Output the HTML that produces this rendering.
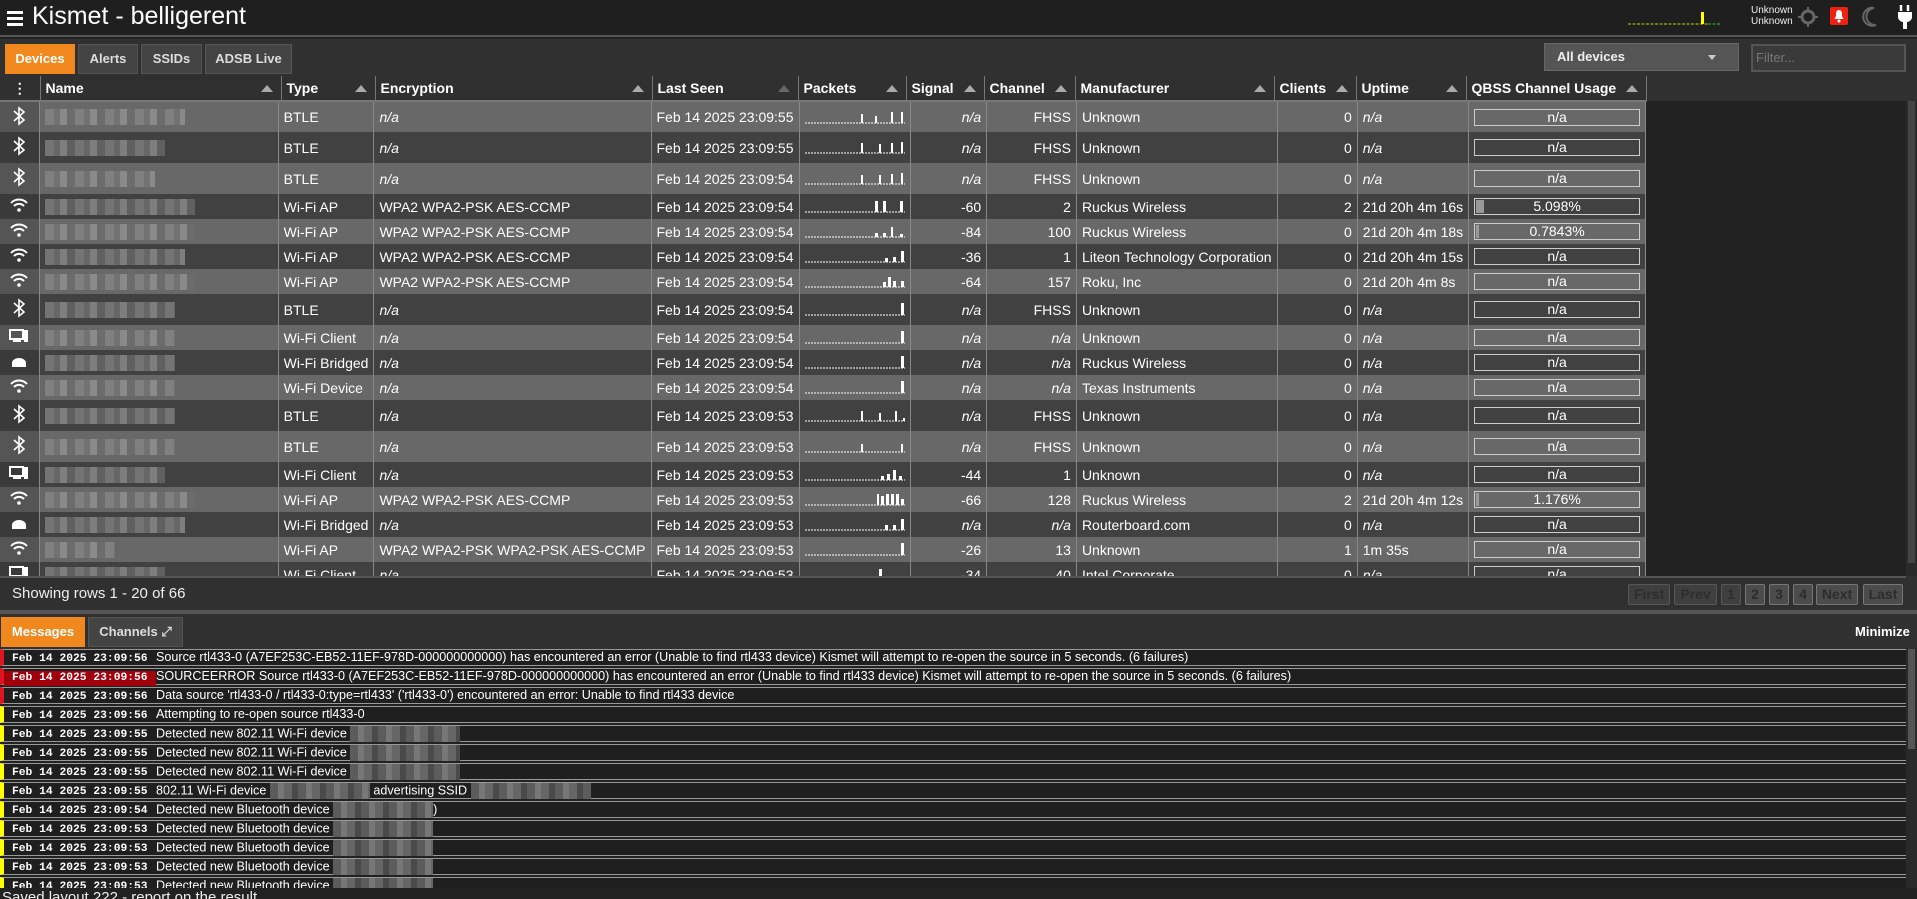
<!DOCTYPE html>
<html><head><meta charset="utf-8"><style>
*{box-sizing:border-box;margin:0;padding:0}
body{width:1917px;height:899px;overflow:hidden;background:#222;font-family:"Liberation Sans",sans-serif;color:#fff;position:relative}
.abs{position:absolute}
#hdr{left:0;top:0;width:1917px;height:37px;background:#1f1f1f;border-bottom:2px solid #555}
#title{left:32px;top:2px;font-size:25px;color:#fff}
#panel{left:0;top:39px;width:1917px;height:572px;background:#303030}
.tab{position:absolute;top:44px;height:30px;background:#444;border:1px solid #555;font-weight:bold;font-size:13px;color:#ddd;text-align:center;line-height:28px}
.tab.on{background:#f0881e;color:#fff;border-color:#f0881e}
table{border-collapse:collapse;table-layout:fixed;position:absolute;left:0;top:76px;font-size:14px}
th{height:25px;background:#303030;text-align:left;font-weight:bold;padding-left:5px;border-right:1px solid #777;border-bottom:2px solid #777;position:relative;white-space:nowrap}
th .ar{position:absolute;right:8px;top:9px;width:0;height:0;border-left:6px solid transparent;border-right:6px solid transparent;border-bottom:7px solid #aaa}
td{padding:0 5px;border-right:1px solid #888;white-space:nowrap;overflow:hidden;color:#fff}
tr.l td{background:#686868}
tr.d td{background:#414141}
tr.t td{height:31px}
tr.s td{height:25px}
td.r{text-align:right}
td.i{font-style:italic}
td.ic{text-align:center;padding:0;background:#555!important}
tr.d td.ic{background:#3a3a3a!important}
.blur{display:block;height:16px;width:150px;background:repeating-linear-gradient(90deg,#8a8a8a 0 9px,#777 9px 15px,#999 15px 22px,#6d6d6d 22px 30px);opacity:.7}
.q{height:17px;border:1px solid #ccc;text-align:center;line-height:15px;position:relative;font-size:14px}
.q b{position:absolute;left:1px;top:1px;bottom:1px;background:#999;font-weight:normal}
.q span{position:relative}
#foot{left:12px;top:585px;font-size:15px;color:#eee}
.pg{position:absolute;top:584px;height:21px;background:#4c4c4c;border:1px solid #777;border-radius:2px;color:#2c2c2c;font-weight:bold;font-size:14px;text-align:center;line-height:19px}
.pg.dim{opacity:.55}
#msgs{left:0;top:649px;width:1906px;height:239px;overflow:hidden;background:#222}
.m{height:17px;margin-bottom:2px;border-left:4px solid #ff0;border-bottom:1px solid #999;border-top:1px solid #999;font-size:12.6px;line-height:15px;white-space:nowrap;position:relative;background:#1f1f1f}
.m.e{border-left-color:#e0141e}
.m .ts{display:inline-block;width:152px;padding-left:8px;font-family:"Liberation Mono",monospace;font-weight:bold;font-size:11.3px}
.m .ts.hl{background:#a0000c}
.bl{display:inline-block;vertical-align:middle;height:16px;background:repeating-linear-gradient(90deg,#5c5c5c 0 8px,#777 8px 14px,#666 14px 22px,#4a4a4a 22px 28px)}
</style></head><body>
<div id="hdr" class="abs"></div>
<svg class="abs" style="left:7px;top:10px" width="16" height="16"><rect y="1" width="16" height="3" fill="#fff"/><rect y="7" width="16" height="3" fill="#fff"/><rect y="13" width="16" height="3" fill="#fff"/></svg>
<div id="title" class="abs">Kismet - belligerent</div>
<svg class="abs" style="left:1628px;top:10px" width="100" height="16"><line x1="0" y1="14" x2="80" y2="14" stroke="#cc0" stroke-dasharray="3 1.5"/><rect x="73" y="2" width="3" height="12" fill="#ff0"/><line x1="80" y1="14" x2="92" y2="14" stroke="#2c2" stroke-dasharray="3 1.5"/></svg>
<div class="abs" style="left:1751px;top:5px;font-size:10px;line-height:11px;color:#eee">Unknown<br>Unknown</div>
<svg class="abs" style="left:1798px;top:7px" width="20" height="20"><circle cx="10" cy="10" r="6" stroke="#666" stroke-width="3" fill="none"/><path d="M10 0v5M10 15v5M0 10h5M15 10h5" stroke="#666" stroke-width="2"/></svg>
<div class="abs" style="left:1830px;top:7px;width:18px;height:18px;background:#e21;border-radius:2px"></div>
<svg class="abs" style="left:1833px;top:9px" width="12" height="14"><path d="M6 1C3 1 3 4 3 7L1.5 10h9L9 7C9 4 9 1 6 1z" fill="#fff"/><circle cx="6" cy="12" r="1.5" fill="#fff"/></svg>
<svg class="abs" style="left:1862px;top:6px" width="18" height="22"><path d="M12 2A9 9 0 1 0 14 19A7.5 7.5 0 0 1 12 2z" fill="none" stroke="#666" stroke-width="2"/></svg>
<svg class="abs" style="left:1897px;top:5px" width="16" height="24"><path d="M4 0v6M11 0v6" stroke="#fff" stroke-width="2.5"/><path d="M1 7h14v5c0 3-3 5-5 5v7H6v-7c-2 0-5-2-5-5z" fill="#fff"/></svg>

<div id="panel" class="abs"></div>
<div class="tab on" style="left:5px;width:70px">Devices</div>
<div class="tab" style="left:78px;width:60px">Alerts</div>
<div class="tab" style="left:141px;width:61px">SSIDs</div>
<div class="tab" style="left:205px;width:87px">ADSB Live</div>
<div class="abs" style="left:1544px;top:43px;width:195px;height:28px;background:#555;border:1px solid #666;font-weight:bold;font-size:13px;line-height:26px;padding-left:12px;color:#eee">All devices<span style="position:absolute;right:22px;top:11px;border-left:4px solid transparent;border-right:4px solid transparent;border-top:5px solid #ccc"></span></div>
<div class="abs" style="left:1751px;top:44px;width:155px;height:28px;background:#3a3a3a;border:2px solid #555;font-size:13px;line-height:24px;padding-left:3px;color:#777">Filter...</div>

<div class="abs" style="left:1646px;top:101px;width:260px;height:475px;background:#222"></div>
<div class="abs" style="left:1906px;top:101px;width:11px;height:475px;background:#2a2a2a"><div style="margin:0 2px;height:462px;background:#444"></div></div>
<div class="abs" style="left:0;top:101px;width:1646px;height:475px;overflow:hidden">
<table style="top:-25px">
<colgroup><col style="width:40px"><col style="width:241px"><col style="width:94px"><col style="width:277px"><col style="width:146px"><col style="width:108px"><col style="width:78px"><col style="width:91px"><col style="width:199px"><col style="width:82px"><col style="width:110px"><col style="width:180px"></colgroup>
<tr><th></th><th></th><th></th><th></th><th></th><th></th><th></th><th></th><th></th><th></th><th></th><th></th></tr>
<tr class="l t"><td class="ic"><svg width="12" height="20" viewBox="0 0 12 20"><path d="M1 5l10 9-5 4V2l5 4-10 9" stroke="#fff" stroke-width="1.6" fill="none"/></svg></td><td><span class="blur" style="width:140px"></span></td><td>BTLE</td><td class="i">n/a</td><td>Feb 14 2025 23:09:55</td><td><svg width="100" height="16"><line x1="0" y1="15" x2="100" y2="15" stroke="#fff" stroke-dasharray="2 1"/><rect x="56" y="6" width="2" height="9" fill="#fff"/><rect x="70" y="8" width="2" height="7" fill="#fff"/><rect x="86" y="4" width="2" height="11" fill="#fff"/><rect x="96" y="4" width="2" height="11" fill="#fff"/></svg></td><td class="r i">n/a</td><td class="r">FHSS</td><td>Unknown</td><td class="r">0</td><td class="i">n/a</td><td><div class="q"><span>n/a</span></div></td></tr>
<tr class="d t"><td class="ic"><svg width="12" height="20" viewBox="0 0 12 20"><path d="M1 5l10 9-5 4V2l5 4-10 9" stroke="#fff" stroke-width="1.6" fill="none"/></svg></td><td><span class="blur" style="width:120px"></span></td><td>BTLE</td><td class="i">n/a</td><td>Feb 14 2025 23:09:55</td><td><svg width="100" height="16"><line x1="0" y1="15" x2="100" y2="15" stroke="#fff" stroke-dasharray="2 1"/><rect x="56" y="5" width="2" height="10" fill="#fff"/><rect x="74" y="6" width="2" height="9" fill="#fff"/><rect x="86" y="5" width="2" height="10" fill="#fff"/><rect x="96" y="4" width="2" height="11" fill="#fff"/></svg></td><td class="r i">n/a</td><td class="r">FHSS</td><td>Unknown</td><td class="r">0</td><td class="i">n/a</td><td><div class="q"><span>n/a</span></div></td></tr>
<tr class="l t"><td class="ic"><svg width="12" height="20" viewBox="0 0 12 20"><path d="M1 5l10 9-5 4V2l5 4-10 9" stroke="#fff" stroke-width="1.6" fill="none"/></svg></td><td><span class="blur" style="width:110px"></span></td><td>BTLE</td><td class="i">n/a</td><td>Feb 14 2025 23:09:54</td><td><svg width="100" height="16"><line x1="0" y1="15" x2="100" y2="15" stroke="#fff" stroke-dasharray="2 1"/><rect x="56" y="6" width="2" height="9" fill="#fff"/><rect x="74" y="6" width="2" height="9" fill="#fff"/><rect x="86" y="5" width="2" height="10" fill="#fff"/><rect x="96" y="4" width="2" height="11" fill="#fff"/></svg></td><td class="r i">n/a</td><td class="r">FHSS</td><td>Unknown</td><td class="r">0</td><td class="i">n/a</td><td><div class="q"><span>n/a</span></div></td></tr>
<tr class="d s"><td class="ic"><svg width="18" height="14" viewBox="0 0 18 14"><path d="M1 5a11 11 0 0 1 16 0M4 8a7 7 0 0 1 10 0" stroke="#fff" stroke-width="2" fill="none"/><circle cx="9" cy="12" r="1.8" fill="#fff"/></svg></td><td><span class="blur" style="width:150px"></span></td><td>Wi-Fi AP</td><td>WPA2 WPA2-PSK AES-CCMP</td><td>Feb 14 2025 23:09:54</td><td><svg width="100" height="16"><line x1="0" y1="15" x2="100" y2="15" stroke="#fff" stroke-dasharray="2 1"/><rect x="70" y="4" width="3" height="11" fill="#fff"/><rect x="78" y="4" width="3" height="11" fill="#fff"/><rect x="95" y="4" width="3" height="11" fill="#fff"/></svg></td><td class="r">-60</td><td class="r">2</td><td>Ruckus Wireless</td><td class="r">2</td><td>21d 20h 4m 16s</td><td><div class="q"><b style="width:8px"></b><span>5.098%</span></div></td></tr>
<tr class="l s"><td class="ic"><svg width="18" height="14" viewBox="0 0 18 14"><path d="M1 5a11 11 0 0 1 16 0M4 8a7 7 0 0 1 10 0" stroke="#fff" stroke-width="2" fill="none"/><circle cx="9" cy="12" r="1.8" fill="#fff"/></svg></td><td><span class="blur" style="width:150px"></span></td><td>Wi-Fi AP</td><td>WPA2 WPA2-PSK AES-CCMP</td><td>Feb 14 2025 23:09:54</td><td><svg width="100" height="16"><line x1="0" y1="15" x2="100" y2="15" stroke="#fff" stroke-dasharray="2 1"/><rect x="70" y="11" width="3" height="4" fill="#fff"/><rect x="78" y="11" width="3" height="4" fill="#fff"/><rect x="86" y="5" width="2" height="10" fill="#fff"/><rect x="95" y="12" width="3" height="3" fill="#fff"/></svg></td><td class="r">-84</td><td class="r">100</td><td>Ruckus Wireless</td><td class="r">0</td><td>21d 20h 4m 18s</td><td><div class="q"><b style="width:3px"></b><span>0.7843%</span></div></td></tr>
<tr class="d s"><td class="ic"><svg width="18" height="14" viewBox="0 0 18 14"><path d="M1 5a11 11 0 0 1 16 0M4 8a7 7 0 0 1 10 0" stroke="#fff" stroke-width="2" fill="none"/><circle cx="9" cy="12" r="1.8" fill="#fff"/></svg></td><td><span class="blur" style="width:140px"></span></td><td>Wi-Fi AP</td><td>WPA2 WPA2-PSK AES-CCMP</td><td>Feb 14 2025 23:09:54</td><td><svg width="100" height="16"><line x1="0" y1="15" x2="100" y2="15" stroke="#fff" stroke-dasharray="2 1"/><rect x="80" y="11" width="3" height="4" fill="#fff"/><rect x="88" y="10" width="3" height="5" fill="#fff"/><rect x="96" y="4" width="3" height="11" fill="#fff"/></svg></td><td class="r">-36</td><td class="r">1</td><td>Liteon Technology Corporation</td><td class="r">0</td><td>21d 20h 4m 15s</td><td><div class="q"><span>n/a</span></div></td></tr>
<tr class="l s"><td class="ic"><svg width="18" height="14" viewBox="0 0 18 14"><path d="M1 5a11 11 0 0 1 16 0M4 8a7 7 0 0 1 10 0" stroke="#fff" stroke-width="2" fill="none"/><circle cx="9" cy="12" r="1.8" fill="#fff"/></svg></td><td><span class="blur" style="width:150px"></span></td><td>Wi-Fi AP</td><td>WPA2 WPA2-PSK AES-CCMP</td><td>Feb 14 2025 23:09:54</td><td><svg width="100" height="16"><line x1="0" y1="15" x2="100" y2="15" stroke="#fff" stroke-dasharray="2 1"/><rect x="78" y="10" width="3" height="5" fill="#fff"/><rect x="83" y="5" width="3" height="10" fill="#fff"/><rect x="88" y="9" width="3" height="6" fill="#fff"/><rect x="96" y="9" width="3" height="6" fill="#fff"/></svg></td><td class="r">-64</td><td class="r">157</td><td>Roku, Inc</td><td class="r">0</td><td>21d 20h 4m 8s</td><td><div class="q"><span>n/a</span></div></td></tr>
<tr class="d t"><td class="ic"><svg width="12" height="20" viewBox="0 0 12 20"><path d="M1 5l10 9-5 4V2l5 4-10 9" stroke="#fff" stroke-width="1.6" fill="none"/></svg></td><td><span class="blur" style="width:130px"></span></td><td>BTLE</td><td class="i">n/a</td><td>Feb 14 2025 23:09:54</td><td><svg width="100" height="16"><line x1="0" y1="15" x2="100" y2="15" stroke="#fff" stroke-dasharray="2 1"/><rect x="96" y="3" width="3" height="12" fill="#fff"/></svg></td><td class="r i">n/a</td><td class="r">FHSS</td><td>Unknown</td><td class="r">0</td><td class="i">n/a</td><td><div class="q"><span>n/a</span></div></td></tr>
<tr class="l s"><td class="ic"><svg width="20" height="14" viewBox="0 0 20 14"><rect x="1" y="1" width="13" height="9" stroke="#fff" stroke-width="2" fill="none"/><rect x="4" y="11" width="8" height="2" fill="#fff"/><rect x="15" y="1" width="4" height="12" fill="#fff"/></svg></td><td><span class="blur" style="width:130px"></span></td><td>Wi-Fi Client</td><td class="i">n/a</td><td>Feb 14 2025 23:09:54</td><td><svg width="100" height="16"><line x1="0" y1="15" x2="100" y2="15" stroke="#fff" stroke-dasharray="2 1"/><rect x="96" y="3" width="3" height="12" fill="#fff"/></svg></td><td class="r i">n/a</td><td class="r i">n/a</td><td>Unknown</td><td class="r">0</td><td class="i">n/a</td><td><div class="q"><span>n/a</span></div></td></tr>
<tr class="d s"><td class="ic"><svg width="18" height="12" viewBox="0 0 18 12"><path d="M2 11V7a7 5 0 0 1 14 0v4z" fill="#fff"/></svg></td><td><span class="blur" style="width:130px"></span></td><td>Wi-Fi Bridged</td><td class="i">n/a</td><td>Feb 14 2025 23:09:54</td><td><svg width="100" height="16"><line x1="0" y1="15" x2="100" y2="15" stroke="#fff" stroke-dasharray="2 1"/><rect x="96" y="3" width="3" height="12" fill="#fff"/></svg></td><td class="r i">n/a</td><td class="r i">n/a</td><td>Ruckus Wireless</td><td class="r">0</td><td class="i">n/a</td><td><div class="q"><span>n/a</span></div></td></tr>
<tr class="l s"><td class="ic"><svg width="18" height="14" viewBox="0 0 18 14"><path d="M1 5a11 11 0 0 1 16 0M4 8a7 7 0 0 1 10 0" stroke="#fff" stroke-width="2" fill="none"/><circle cx="9" cy="12" r="1.8" fill="#fff"/></svg></td><td><span class="blur" style="width:130px"></span></td><td>Wi-Fi Device</td><td class="i">n/a</td><td>Feb 14 2025 23:09:54</td><td><svg width="100" height="16"><line x1="0" y1="15" x2="100" y2="15" stroke="#fff" stroke-dasharray="2 1"/><rect x="96" y="3" width="3" height="12" fill="#fff"/></svg></td><td class="r i">n/a</td><td class="r i">n/a</td><td>Texas Instruments</td><td class="r">0</td><td class="i">n/a</td><td><div class="q"><span>n/a</span></div></td></tr>
<tr class="d t"><td class="ic"><svg width="12" height="20" viewBox="0 0 12 20"><path d="M1 5l10 9-5 4V2l5 4-10 9" stroke="#fff" stroke-width="1.6" fill="none"/></svg></td><td><span class="blur" style="width:130px"></span></td><td>BTLE</td><td class="i">n/a</td><td>Feb 14 2025 23:09:53</td><td><svg width="100" height="16"><line x1="0" y1="15" x2="100" y2="15" stroke="#fff" stroke-dasharray="2 1"/><rect x="56" y="5" width="2" height="10" fill="#fff"/><rect x="74" y="7" width="2" height="8" fill="#fff"/><rect x="90" y="5" width="2" height="10" fill="#fff"/><rect x="98" y="12" width="2" height="3" fill="#fff"/></svg></td><td class="r i">n/a</td><td class="r">FHSS</td><td>Unknown</td><td class="r">0</td><td class="i">n/a</td><td><div class="q"><span>n/a</span></div></td></tr>
<tr class="l t"><td class="ic"><svg width="12" height="20" viewBox="0 0 12 20"><path d="M1 5l10 9-5 4V2l5 4-10 9" stroke="#fff" stroke-width="1.6" fill="none"/></svg></td><td><span class="blur" style="width:130px"></span></td><td>BTLE</td><td class="i">n/a</td><td>Feb 14 2025 23:09:53</td><td><svg width="100" height="16"><line x1="0" y1="15" x2="100" y2="15" stroke="#fff" stroke-dasharray="2 1"/><rect x="56" y="7" width="2" height="8" fill="#fff"/><rect x="96" y="7" width="2" height="8" fill="#fff"/></svg></td><td class="r i">n/a</td><td class="r">FHSS</td><td>Unknown</td><td class="r">0</td><td class="i">n/a</td><td><div class="q"><span>n/a</span></div></td></tr>
<tr class="d s"><td class="ic"><svg width="20" height="14" viewBox="0 0 20 14"><rect x="1" y="1" width="13" height="9" stroke="#fff" stroke-width="2" fill="none"/><rect x="4" y="11" width="8" height="2" fill="#fff"/><rect x="15" y="1" width="4" height="12" fill="#fff"/></svg></td><td><span class="blur" style="width:120px"></span></td><td>Wi-Fi Client</td><td class="i">n/a</td><td>Feb 14 2025 23:09:53</td><td><svg width="100" height="16"><line x1="0" y1="15" x2="100" y2="15" stroke="#fff" stroke-dasharray="2 1"/><rect x="76" y="11" width="3" height="4" fill="#fff"/><rect x="82" y="9" width="3" height="6" fill="#fff"/><rect x="88" y="5" width="3" height="10" fill="#fff"/><rect x="94" y="11" width="3" height="4" fill="#fff"/></svg></td><td class="r">-44</td><td class="r">1</td><td>Unknown</td><td class="r">0</td><td class="i">n/a</td><td><div class="q"><span>n/a</span></div></td></tr>
<tr class="l s"><td class="ic"><svg width="18" height="14" viewBox="0 0 18 14"><path d="M1 5a11 11 0 0 1 16 0M4 8a7 7 0 0 1 10 0" stroke="#fff" stroke-width="2" fill="none"/><circle cx="9" cy="12" r="1.8" fill="#fff"/></svg></td><td><span class="blur" style="width:150px"></span></td><td>Wi-Fi AP</td><td>WPA2 WPA2-PSK AES-CCMP</td><td>Feb 14 2025 23:09:53</td><td><svg width="100" height="16"><line x1="0" y1="15" x2="100" y2="15" stroke="#fff" stroke-dasharray="2 1"/><rect x="72" y="4" width="2" height="11" fill="#fff"/><rect x="76" y="6" width="3" height="9" fill="#fff"/><rect x="81" y="4" width="3" height="11" fill="#fff"/><rect x="86" y="4" width="3" height="11" fill="#fff"/><rect x="91" y="4" width="3" height="11" fill="#fff"/><rect x="96" y="9" width="3" height="6" fill="#fff"/></svg></td><td class="r">-66</td><td class="r">128</td><td>Ruckus Wireless</td><td class="r">2</td><td>21d 20h 4m 12s</td><td><div class="q"><b style="width:3px"></b><span>1.176%</span></div></td></tr>
<tr class="d s"><td class="ic"><svg width="18" height="12" viewBox="0 0 18 12"><path d="M2 11V7a7 5 0 0 1 14 0v4z" fill="#fff"/></svg></td><td><span class="blur" style="width:140px"></span></td><td>Wi-Fi Bridged</td><td class="i">n/a</td><td>Feb 14 2025 23:09:53</td><td><svg width="100" height="16"><line x1="0" y1="15" x2="100" y2="15" stroke="#fff" stroke-dasharray="2 1"/><rect x="80" y="10" width="3" height="5" fill="#fff"/><rect x="88" y="10" width="3" height="5" fill="#fff"/><rect x="96" y="4" width="3" height="11" fill="#fff"/></svg></td><td class="r i">n/a</td><td class="r i">n/a</td><td>Routerboard.com</td><td class="r">0</td><td class="i">n/a</td><td><div class="q"><span>n/a</span></div></td></tr>
<tr class="l s"><td class="ic"><svg width="18" height="14" viewBox="0 0 18 14"><path d="M1 5a11 11 0 0 1 16 0M4 8a7 7 0 0 1 10 0" stroke="#fff" stroke-width="2" fill="none"/><circle cx="9" cy="12" r="1.8" fill="#fff"/></svg></td><td><span class="blur" style="width:70px"></span></td><td>Wi-Fi AP</td><td>WPA2 WPA2-PSK WPA2-PSK AES-CCMP</td><td>Feb 14 2025 23:09:53</td><td><svg width="100" height="16"><line x1="0" y1="15" x2="100" y2="15" stroke="#fff" stroke-dasharray="2 1"/><rect x="96" y="3" width="3" height="12" fill="#fff"/></svg></td><td class="r">-26</td><td class="r">13</td><td>Unknown</td><td class="r">1</td><td>1m 35s</td><td><div class="q"><span>n/a</span></div></td></tr>
<tr class="d s"><td class="ic"><svg width="20" height="14" viewBox="0 0 20 14"><rect x="1" y="1" width="13" height="9" stroke="#fff" stroke-width="2" fill="none"/><rect x="4" y="11" width="8" height="2" fill="#fff"/><rect x="15" y="1" width="4" height="12" fill="#fff"/></svg></td><td><span class="blur" style="width:120px"></span></td><td>Wi-Fi Client</td><td class="i">n/a</td><td>Feb 14 2025 23:09:53</td><td><svg width="100" height="16"><line x1="0" y1="15" x2="100" y2="15" stroke="#fff" stroke-dasharray="2 1"/><rect x="74" y="4" width="3" height="11" fill="#fff"/></svg></td><td class="r">-34</td><td class="r">40</td><td>Intel Corporate</td><td class="r">0</td><td class="i">n/a</td><td><div class="q"><span>n/a</span></div></td></tr>
</table></div>
<table style="top:76px;left:0">
<colgroup><col style="width:40px"><col style="width:241px"><col style="width:94px"><col style="width:277px"><col style="width:146px"><col style="width:108px"><col style="width:78px"><col style="width:91px"><col style="width:199px"><col style="width:82px"><col style="width:110px"><col style="width:180px"></colgroup>
<tr><th style="text-align:center;padding:0">&#8942;</th><th>Name<span class="ar"></span></th><th>Type<span class="ar"></span></th><th>Encryption<span class="ar"></span></th><th>Last Seen<span class="ar" style="border-bottom-color:#666"></span></th><th>Packets<span class="ar"></span></th><th>Signal<span class="ar"></span></th><th>Channel<span class="ar"></span></th><th>Manufacturer<span class="ar"></span></th><th>Clients<span class="ar"></span></th><th>Uptime<span class="ar"></span></th><th>QBSS Channel Usage<span class="ar"></span></th></tr>
</table>
<div class="abs" style="left:0;top:576px;width:1906px;height:2px;background:#555"></div>
<div id="foot" class="abs">Showing rows 1 - 20 of 66</div>
<div class="pg dim" style="left:1628px;width:42px">First</div>
<div class="pg dim" style="left:1674px;width:43px">Prev</div>
<div class="pg dim" style="left:1721px;width:20px">1</div>
<div class="pg" style="left:1745px;width:20px">2</div>
<div class="pg" style="left:1769px;width:20px">3</div>
<div class="pg" style="left:1793px;width:20px">4</div>
<div class="pg" style="left:1816px;width:42px">Next</div>
<div class="pg" style="left:1863px;width:40px">Last</div>
<div class="abs" style="left:0;top:610px;width:1917px;height:4px;background:#555"></div>
<div class="abs" style="left:0;top:614px;width:1917px;height:35px;background:#303030"></div>
<div class="tab on" style="top:617px;left:1px;width:84px">Messages</div>
<div class="tab" style="top:617px;left:88px;width:95px">Channels &#10530;</div>
<div class="abs" style="left:1855px;top:624px;font-weight:bold;font-size:13px">Minimize</div>
<div id="msgs" class="abs">
<div class="m e"><span class="ts">Feb 14 2025 23:09:56</span>Source rtl433-0 (A7EF253C-EB52-11EF-978D-000000000000) has encountered an error (Unable to find rtl433 device) Kismet will attempt to re-open the source in 5 seconds. (6 failures)</div>
<div class="m e"><span class="ts hl">Feb 14 2025 23:09:56</span>SOURCEERROR Source rtl433-0 (A7EF253C-EB52-11EF-978D-000000000000) has encountered an error (Unable to find rtl433 device) Kismet will attempt to re-open the source in 5 seconds. (6 failures)</div>
<div class="m e"><span class="ts">Feb 14 2025 23:09:56</span>Data source 'rtl433-0 / rtl433-0:type=rtl433' ('rtl433-0') encountered an error: Unable to find rtl433 device</div>
<div class="m"><span class="ts">Feb 14 2025 23:09:56</span>Attempting to re-open source rtl433-0</div>
<div class="m"><span class="ts">Feb 14 2025 23:09:55</span>Detected new 802.11 Wi-Fi device <span class="bl" style="width:110px"></span></div>
<div class="m"><span class="ts">Feb 14 2025 23:09:55</span>Detected new 802.11 Wi-Fi device <span class="bl" style="width:110px"></span></div>
<div class="m"><span class="ts">Feb 14 2025 23:09:55</span>Detected new 802.11 Wi-Fi device <span class="bl" style="width:110px"></span></div>
<div class="m"><span class="ts">Feb 14 2025 23:09:55</span>802.11 Wi-Fi device <span class="bl" style="width:100px"></span> advertising SSID <span class="bl" style="width:120px"></span></div>
<div class="m"><span class="ts">Feb 14 2025 23:09:54</span>Detected new Bluetooth device <span class="bl" style="width:100px"></span>)</div>
<div class="m"><span class="ts">Feb 14 2025 23:09:53</span>Detected new Bluetooth device <span class="bl" style="width:100px"></span></div>
<div class="m"><span class="ts">Feb 14 2025 23:09:53</span>Detected new Bluetooth device <span class="bl" style="width:100px"></span></div>
<div class="m"><span class="ts">Feb 14 2025 23:09:53</span>Detected new Bluetooth device <span class="bl" style="width:100px"></span></div>
<div class="m"><span class="ts">Feb 14 2025 23:09:53</span>Detected new Bluetooth device <span class="bl" style="width:100px"></span></div>
</div>
<div class="abs" style="left:1906px;top:649px;width:11px;height:239px;background:#2a2a2a"><div style="margin:0 2px;height:100px;background:#555"></div></div>
<div class="abs" style="left:0;top:888px;width:1917px;height:11px;background:#222;overflow:hidden;font-size:15px;line-height:16px;color:#eee;padding-left:2px;padding-top:2px">Saved layout 222 - report on the result</div>
</body></html>
